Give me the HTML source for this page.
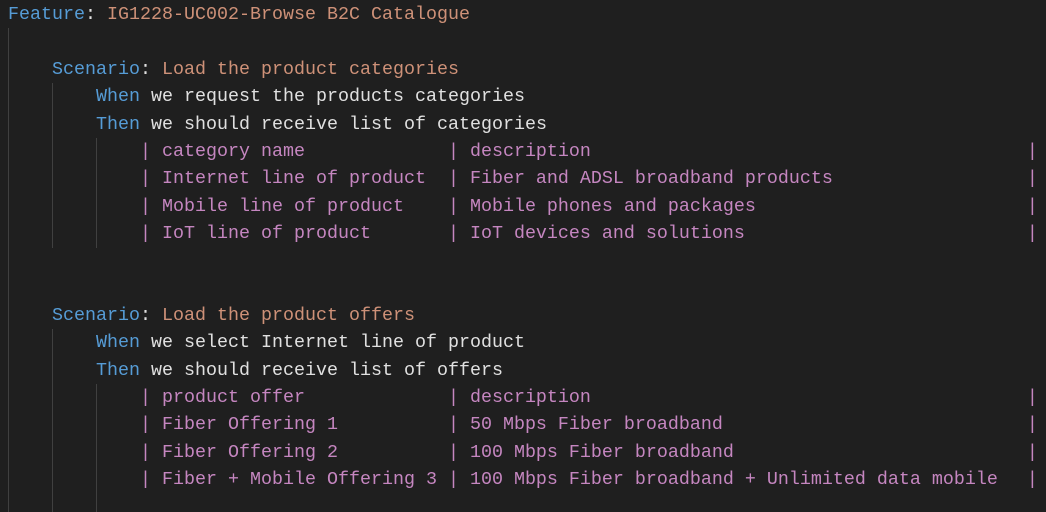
<!DOCTYPE html><html><head><style>
body{margin:0;background:#1f1f1f;width:1046px;height:512px;overflow:hidden;position:relative;font-family:"Liberation Mono","DejaVu Sans Mono",monospace;font-size:18.33px;color:#e0e0e0}
.l{position:absolute;left:8px;height:27.33px;line-height:27.33px;white-space:pre}
.k{color:#569cd6}.o{color:#ce9178}.p{color:#c586c0}
.e{position:relative;left:-4px}
.g{position:absolute;width:1px;background:#404040}
</style></head><body>
<div class="g" style="left:8px;top:28px;height:484px"></div>
<div class="g" style="left:52px;top:83px;height:165px"></div>
<div class="g" style="left:52px;top:329px;height:183px"></div>
<div class="g" style="left:96px;top:138px;height:110px"></div>
<div class="g" style="left:96px;top:384px;height:128px"></div>
<div class="l" style="top:1px"><span class="k">Feature</span>: <span class="o">IG1228-UC002-Browse B2C Catalogue</span></div>
<div class="l" style="top:56px">    <span class="k">Scenario</span>: <span class="o">Load the product categories</span></div>
<div class="l" style="top:83px">        <span class="k">When</span> we request the products categories</div>
<div class="l" style="top:111px">        <span class="k">Then</span> we should receive list of categories</div>
<div class="l p" style="top:138px">            | category name             | description                                        <span class="e">|</span></div>
<div class="l p" style="top:165px">            | Internet line of product  | Fiber and ADSL broadband products                  <span class="e">|</span></div>
<div class="l p" style="top:193px">            | Mobile line of product    | Mobile phones and packages                         <span class="e">|</span></div>
<div class="l p" style="top:220px">            | IoT line of product       | IoT devices and solutions                          <span class="e">|</span></div>
<div class="l" style="top:302px">    <span class="k">Scenario</span>: <span class="o">Load the product offers</span></div>
<div class="l" style="top:329px">        <span class="k">When</span> we select Internet line of product</div>
<div class="l" style="top:357px">        <span class="k">Then</span> we should receive list of offers</div>
<div class="l p" style="top:384px">            | product offer             | description                                        <span class="e">|</span></div>
<div class="l p" style="top:411px">            | Fiber Offering 1          | 50 Mbps Fiber broadband                            <span class="e">|</span></div>
<div class="l p" style="top:439px">            | Fiber Offering 2          | 100 Mbps Fiber broadband                           <span class="e">|</span></div>
<div class="l p" style="top:466px">            | Fiber + Mobile Offering 3 | 100 Mbps Fiber broadband + Unlimited data mobile   <span class="e">|</span></div>
</body></html>
